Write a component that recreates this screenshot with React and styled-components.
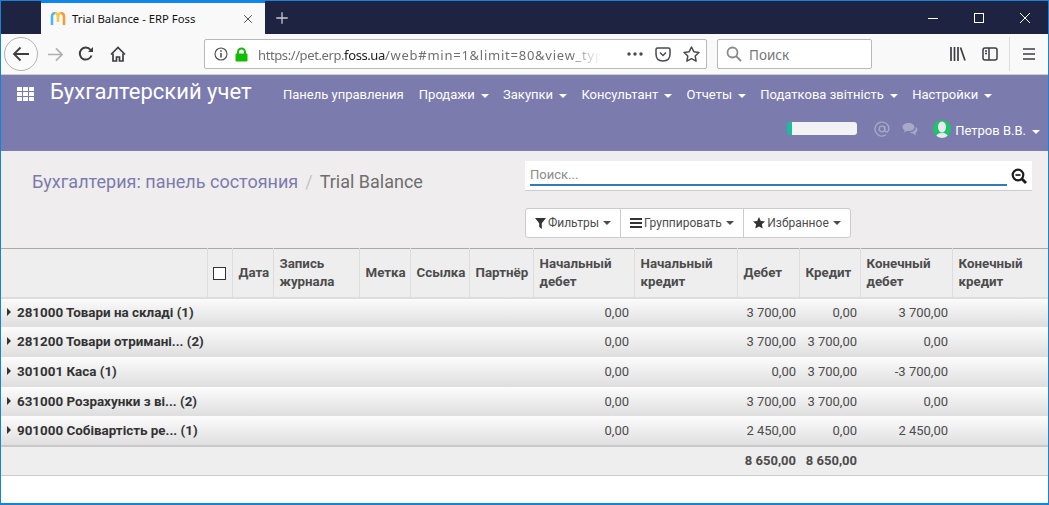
import React from 'react';
import styled, { createGlobalStyle } from 'styled-components';
import { X, Plus } from 'lucide-react';

const GlobalStyle = createGlobalStyle`
  html, body { margin: 0; padding: 0; background: #fff; overflow: hidden; }
  * { box-sizing: border-box; }
`;

const Win = styled.div`
  width: 1049px;
  height: 505px;
  border: 1px solid #1683d8;
  border-bottom-width: 2px;
  background: #fff;
  font-family: Roboto, sans-serif;
  overflow: hidden;
`;

/* browser chrome */
const TabBar = styled.div`
  height: 33px;
  background: #1f2342;
  display: flex;
  align-items: stretch;
  padding-left: 40px;
`;
const Tab = styled.div`
  width: 224px;
  background: #f9f9fa;
  border-top: 2px solid #0a84ff;
  display: flex;
  align-items: center;
  padding: 0 10px 0 9px;
  font: 11.3px 'Noto Sans', sans-serif;
  color: #111;
  svg:first-child { margin-right: 6px; }
  span { flex: 1; }
`;
const NewTab = styled.div`
  width: 34px;
  display: flex;
  align-items: center;
  justify-content: center;
  color: #c9cad2;
`;
const WinButtons = styled.div`
  margin-left: auto;
  display: flex;
  align-items: center;
  color: #fff;
`;
const WinButton = styled.div`
  width: 46px;
  height: 100%;
  display: flex;
  align-items: center;
  justify-content: center;
`;
const ToolBar = styled.div`
  height: 41px;
  background: #f9f9fa;
  border-bottom: 1px solid #ccc;
  display: flex;
  align-items: center;
  padding-left: 3px;
  color: #3e3e40;
`;
const BackCircle = styled.div`
  width: 34px;
  height: 34px;
  border-radius: 50%;
  border: 1px solid #b3b3b3;
  background: #fbfbfb;
  display: flex;
  align-items: center;
  justify-content: center;
`;
const NavIcon = styled.div`
  width: ${p => p.$w}px;
  display: flex;
  justify-content: center;
  color: ${p => p.$dim ? '#b0b0b1' : 'inherit'};
`;
const UrlBar = styled.div`
  width: 503px;
  height: 30px;
  margin-left: 68px;
  background: #fff;
  border: 1px solid #b9b9bb;
  border-radius: 2px;
  display: flex;
  align-items: center;
  padding-left: 9px;
  font: 13px 'Noto Sans', sans-serif;
  color: #6f6f73;
`;
const UrlText = styled.div`
  margin-left: 10px;
  padding-top: 2px;
  white-space: nowrap;
  mask-image: linear-gradient(to right, #000 90%, transparent 99%);
  b { font-weight: 400; color: #222; }
`;
const UrlPart = styled.span`
  letter-spacing: ${p => p.$sp}px;
`;
const UrlIcons = styled.div`
  margin-left: auto;
  display: flex;
  align-items: center;
  gap: 12px;
  padding-right: 6px;
  color: #4a4a4f;
`;
const SearchBar = styled.div`
  width: 155px;
  height: 30px;
  margin-left: 10px;
  background: #fff;
  border: 1px solid #b9b9bb;
  border-radius: 2px;
  display: flex;
  align-items: center;
  gap: 7px;
  padding-left: 8px;
  font: 13.5px 'Noto Sans', sans-serif;
  color: #777;
`;
const SearchLabel = styled.span`
  padding-top: 2px;
`;
const ToolRight = styled.div`
  margin-left: auto;
  display: flex;
  align-items: center;
  height: 100%;
  padding-right: 12px;
`;
const ToolDivider = styled.div`
  width: 1px;
  height: 34px;
  background: #ddd;
  margin: 0 12px 0 11px;
`;

/* app navbar */
const AppNav = styled.div`
  height: 76px;
  background: #7c7bad;
  color: #fff;
`;
const NavTop = styled.div`
  height: 37px;
  display: flex;
  align-items: center;
  padding-left: 16px;
`;
const AppTitle = styled.div`
  font-size: 22px;
  line-height: 30px;
  margin: -4px 32px 0 15px;
  width: 201px;
  white-space: nowrap;
`;
const Menu = styled.div`
  display: flex;
  gap: 14.3px;
  font-size: 13px;
  padding-top: 2px;
  span:first-child { margin-right: 1px; }
`;
const Caret = styled.i`
  display: inline-block;
  width: 0;
  height: 0;
  margin-left: ${p => p.$gap || 6}px;
  vertical-align: middle;
  border-top: 4px solid currentColor;
  border-left: 4px solid transparent;
  border-right: 4px solid transparent;
`;
const NavBottom = styled.div`
  height: 39px;
  display: flex;
  align-items: center;
  justify-content: flex-end;
  padding: 0 8px 6px 0;
  font-size: 13px;
`;
const Progress = styled.div`
  width: 70px;
  height: 13px;
  background: #f2f2f4;
  border-left: 5px solid #1abc9c;
  border-radius: 3px;
  margin-right: 17px;
`;
const NavGlyph = styled.div`
  display: flex;
  color: #a9a8c9;
  margin-right: ${p => p.$mr}px;
`;
const Avatar = styled.div`
  width: 18px;
  height: 18px;
  border-radius: 50%;
  background: #1ec36b;
  overflow: hidden;
  margin-right: 4px;
  display: flex;
`;
const UserName = styled.span`
  padding-top: 4px;
`;

/* control panel */
const ControlPanel = styled.div`
  height: 97px;
  background: #efeded;
  display: flex;
`;
const Breadcrumb = styled.div`
  width: 524px;
  padding: 20px 0 0 31px;
  font-size: 18px;
  line-height: 22px;
  color: #6e6e6e;
  a { color: #7c7bad; }
  i { font-style: normal; color: #c4c4c4; margin: 0 7px; }
`;
const RightPanel = styled.div`
  display: flex;
  flex-direction: column;
  padding-top: 10px;
`;
const SearchView = styled.div`
  width: 507px;
  height: 30px;
  background: #fff;
  border-bottom: 1px solid #ccc;
  padding: 5px 5px 0 5px;
  display: flex;
  gap: 4px;
  align-items: flex-start;
`;
const SearchInput = styled.div`
  flex: 1;
  height: 20px;
  border-bottom: 2px solid #337ab7;
  font-size: 13px;
  line-height: 17px;
  color: #8b8b8b;
`;
const BtnGroup = styled.div`
  display: inline-flex;
  align-self: flex-start;
  margin-top: 17px;
  height: 30px;
  background: #fff;
  border: 1px solid #ccc;
  border-radius: 3px;
`;
const Btn = styled.div`
  display: flex;
  align-items: center;
  width: ${p => p.$w}px;
  justify-content: center;
  gap: 2px;
  font-size: 12px;
  color: #4c4c4c;
  & + & { border-left: 1px solid #ccc; }
  svg { color: #333; }
`;

/* table */
const Table = styled.table`
  width: 1047px;
  table-layout: fixed;
  border-collapse: collapse;
  font-size: 13px;
`;
const Th = styled.th`
  height: 49px;
  padding: 1px 6px 0;
  text-align: left;
  font-size: 13.3px;
  font-weight: 700;
  line-height: 18px;
  color: #4c4c4c;
  background: #eee;
  border-top: 1px solid #aaa;
  border-bottom: 2px solid #ddd;
  border-right: 1px solid #ddd;
  &:last-child { border-right: 0; }
`;
const Tr = styled.tr`
  height: ${p => p.$h}px;
  background: linear-gradient(to bottom, #fcfcfc, #dedede);
`;
const GroupName = styled.td`
  padding: 0 0 0 6px;
  font-size: 13.4px;
  font-weight: 700;
  color: #333;
  white-space: nowrap;
`;
const Arrow = styled.i`
  display: inline-block;
  width: 0;
  height: 0;
  margin-right: 6px;
  vertical-align: 1px;
  border-left: 4px solid #333;
  border-top: 4px solid transparent;
  border-bottom: 4px solid transparent;
`;
const Num = styled.td`
  padding: 0 ${p => p.$pr || 4}px 0 0;
  text-align: right;
  color: #4c4c4c;
  white-space: nowrap;
`;
const FootRow = styled.tr`
  height: 30px;
  background: #eee;
  border-top: 2px solid #c8c8c8;
  border-bottom: 1px solid #ccc;
`;
const FootCell = styled.td`
  padding: 0 3px 0 0;
  text-align: right;
  font-weight: 700;
  color: #4c4c4c;
  white-space: nowrap;
`;
const CheckBox = styled.div`
  width: 13px;
  height: 13px;
  border: 1px solid #333;
  background: #fff;
  margin-left: -1px;
`;

const widths = [206, 25, 41, 86, 51, 59, 64, 101, 103, 62, 61, 92, 96];
const groups = [
  { h: 29, name: '281000 Товари на складі (1)', vals: ['0,00', '3 700,00', '0,00', '3 700,00'] },
  { h: 30, name: '281200 Товари отримані... (2)', vals: ['0,00', '3 700,00', '3 700,00', '0,00'] },
  { h: 30, name: '301001 Каса (1)', vals: ['0,00', '0,00', '3 700,00', '-3 700,00'] },
  { h: 29, name: '631000 Розрахунки з ві... (2)', vals: ['0,00', '3 700,00', '3 700,00', '0,00'] },
  { h: 30, name: '901000 Собівартість ре... (1)', vals: ['0,00', '2 450,00', '0,00', '2 450,00'] },
];
const menu = ['Продажи', 'Закупки', 'Консультант', 'Отчеты', 'Податкова звітність', 'Настройки'];

const Favicon = () => (
  <svg width="16" height="16" viewBox="0 0 16 16" fill="none" strokeWidth="2.6">
    <path d="M2 14V6q0-4 3-4" stroke="#4db6f2" />
    <path d="M5 2q3 0 3 4v5" stroke="#f7c93e" />
    <path d="M8 6q0-4 3-4" stroke="#f7c93e" />
    <path d="M11 2q3 0 3 4v8" stroke="#f29a3d" />
  </svg>
);

export default function App() {
  return (
    <Win>
      <GlobalStyle />
      <TabBar>
        <Tab>
          <Favicon />
          <span>Trial Balance - ERP Foss</span>
          <X size={14} color="#444" strokeWidth={1.6} />
        </Tab>
        <NewTab><Plus size={18} strokeWidth={1.7} /></NewTab>
        <WinButtons>
          <WinButton>
            <svg width="10" height="10" viewBox="0 0 10 10" stroke="#fff" fill="none"><path d="M0 5.500h10" /></svg>
          </WinButton>
          <WinButton>
            <svg width="10" height="10" viewBox="0 0 10 10" stroke="#fff" fill="none"><rect x="0.500" y="0.500" width="9" height="9" /></svg>
          </WinButton>
          <WinButton>
            <svg width="10" height="10" viewBox="0 0 10 10" stroke="#fff" fill="none"><path d="m0 0 10 10M10 0 0 10" /></svg>
          </WinButton>
        </WinButtons>
      </TabBar>
      <ToolBar>
        <BackCircle>
          <svg width="18" height="16" viewBox="0 0 18 16" fill="none" stroke="#3e3e40" strokeWidth="1.8">
            <path d="M17 8H2M8.5 1.5 2 8l6.5 6.5" />
          </svg>
        </BackCircle>
        <NavIcon $dim $w={34}>
          <svg width="17" height="15" viewBox="0 0 18 16" fill="none" stroke="currentColor" strokeWidth="1.8">
            <path d="M1 8h15M9.5 1.500 16 8l-6.500 6.500" />
          </svg>
        </NavIcon>
        <NavIcon $w={28}>
          <svg width="16" height="16" viewBox="0 0 16 16" fill="none" stroke="currentColor" strokeWidth="2">
            <path d="M13.500 9.500A6 6 0 1 1 12.500 3.800" />
            <path d="M15 1v5h-5z" fill="currentColor" stroke="none" />
          </svg>
        </NavIcon>
        <NavIcon $w={36}>
          <svg width="16" height="16" viewBox="0 0 16 16" fill="none" stroke="currentColor" strokeWidth="1.700">
            <path d="M1 8.500 8 1.500l7 7" />
            <path d="M3 7.500V15h3.500v-4h3v4H13V7.500" />
          </svg>
        </NavIcon>
        <UrlBar>
          <svg width="14" height="14" viewBox="0 0 14 14" fill="none" stroke="#4a4a4f" strokeWidth="1.100">
            <circle cx="7" cy="7" r="6" />
            <path d="M7 6v4.500M7 3.300v1.500" strokeWidth="1.500" />
          </svg>
          <svg width="13" height="15" viewBox="0 0 13 15" style={{ marginLeft: 7 }}>
            <path d="M3 7V5a3.500 3.500 0 0 1 7 0v2" fill="none" stroke="#12bc00" strokeWidth="2" />
            <rect x="0.500" y="6.500" width="12" height="8" rx="1" fill="#12bc00" />
          </svg>
          <UrlText>
            <UrlPart $sp={-0.4}>https://pet.erp.<b>foss.ua</b></UrlPart>
            <UrlPart $sp={0.75}>/web#min=1&amp;limit=80&amp;view_typ</UrlPart>
          </UrlText>
          <UrlIcons>
            <svg width="16" height="4" viewBox="0 0 16 4" fill="currentColor">
              <circle cx="2" cy="2" r="1.700" /><circle cx="8" cy="2" r="1.700" /><circle cx="14" cy="2" r="1.700" />
            </svg>
            <svg width="16" height="15" viewBox="0 0 16 15" fill="none" stroke="currentColor" strokeWidth="1.500">
              <path d="M1 2.500q0-1.500 1.500-1.500h11Q15 1 15 2.500V7q0 7-7 7T1 7z" />
              <path d="m5 5.500 3 3 3-3" />
            </svg>
            <svg width="17" height="16" viewBox="0 0 17 16" fill="none" stroke="currentColor" strokeWidth="1.500">
              <path d="m8.500 1 2.300 4.700 5.200.7-3.800 3.600.9 5.100-4.600-2.500-4.600 2.500.9-5.100L1 6.400l5.200-.7z" strokeLinejoin="round" />
            </svg>
          </UrlIcons>
        </UrlBar>
        <SearchBar>
          <svg width="16" height="16" viewBox="0 0 16 16" fill="none" stroke="#8a8a8d" strokeWidth="1.800">
            <circle cx="6.500" cy="6.500" r="5" /><path d="m10 10 5 5" />
          </svg>
          <SearchLabel>Поиск</SearchLabel>
        </SearchBar>
        <ToolRight>
          <svg width="16" height="14" viewBox="0 0 16 14" fill="none" stroke="currentColor" strokeWidth="1.700">
            <path d="M1 0v14M4.500 0v14M8 0v14M10.500.5l4.500 13" />
          </svg>
          <svg width="16" height="14" viewBox="0 0 16 14" fill="none" stroke="currentColor" strokeWidth="1.500" style={{ marginLeft: 16 }}>
            <rect x="1" y="1" width="14" height="12" rx="2" />
            <path d="M7 1v12M3 4h2M3 6.500h2" />
          </svg>
          <ToolDivider />
          <svg width="14" height="12" viewBox="0 0 14 12" fill="none" stroke="currentColor" strokeWidth="1.700">
            <path d="M1 1h12M1 6h12M1 11h12" />
          </svg>
        </ToolRight>
      </ToolBar>

      <AppNav>
        <NavTop>
          <svg width="18" height="14" viewBox="0 0 18 14" fill="#fff">
            {[0, 5, 10].map(y => [0, 6, 12].map(x => <rect key={`${x}-${y}`} x={x} y={y} width="5" height="4" rx="0.500" />))}
          </svg>
          <AppTitle>Бухгалтерский учет</AppTitle>
          <Menu>
            <span>Панель управления</span>
            {menu.map(m => <span key={m}>{m}<Caret /></span>)}
          </Menu>
        </NavTop>
        <NavBottom>
          <Progress />
          <NavGlyph $mr={12}>
            <svg width="16" height="16" viewBox="0 0 16 16" fill="none" stroke="currentColor" strokeWidth="1.300">
              <circle cx="8" cy="8" r="2.800" />
              <path d="M10.800 5.200V9q0 2 1.700 2T15 8A7 7 0 1 0 12 13.800" />
            </svg>
          </NavGlyph>
          <NavGlyph $mr={14}>
            <svg width="17" height="14" viewBox="0 0 17 14" fill="currentColor">
              <path d="M6.500 1C3 1 .5 2.800.5 5c0 1.300.8 2.400 2 3.100L2 10.500l2.600-1.600q1 .2 1.900.2c3.500 0 6-1.800 6-4.100S10 1 6.500 1z" />
              <path d="M13.500 4.500q.3.500.3 1c0 2.800-2.800 4.700-6.300 4.800 1 .9 2.200 1.200 3.500 1.200l3 2-.5-2.700c1.300-.6 2-1.600 2-2.700 0-1.600-.8-2.700-2-3.600z" />
            </svg>
          </NavGlyph>
          <Avatar>
            <svg width="18" height="18" viewBox="0 0 18 18" fill="#e9e9ee">
              <ellipse cx="9" cy="7" rx="4" ry="5.500" />
              <path d="M3 18q0-5 6-5t6 5z" />
            </svg>
          </Avatar>
          <UserName>Петров В.В.<Caret $gap={6} /></UserName>
        </NavBottom>
      </AppNav>

      <ControlPanel>
        <Breadcrumb><a>Бухгалтерия: панель состояния</a><i>/</i>Trial Balance</Breadcrumb>
        <RightPanel>
          <SearchView>
            <SearchInput>Поиск...</SearchInput>
            <svg width="16" height="16" viewBox="0 0 16 16" fill="none" stroke="#1c1c1c" strokeWidth="2.200" style={{ marginTop: 2 }}>
              <circle cx="7" cy="7" r="5.300" />
              <path d="M4.500 7h5" strokeWidth="1.700" />
              <path d="m11 11 4 4" strokeWidth="2.800" />
            </svg>
          </SearchView>
          <BtnGroup>
            <Btn $w={94}>
              <svg width="11" height="11" viewBox="0 0 11 11" fill="currentColor"><path d="M0 0h11L6.800 5.200V11L4.200 9V5.200z" /></svg>
              Фильтры<Caret $gap={2} />
            </Btn>
            <Btn $w={123}>
              <svg width="12" height="10" viewBox="0 0 12 10" fill="currentColor"><path d="M0 0h12v2H0zM0 4h12v2H0zM0 8h12v2H0z" /></svg>
              Группировать<Caret $gap={2} />
            </Btn>
            <Btn $w={107}>
              <svg width="12" height="12" viewBox="0 0 12 12" fill="currentColor"><path d="m6 0 1.800 3.900 4.200.5-3.100 2.900.8 4.200L6 9.400l-3.700 2.100.8-4.200L0 4.400l4.200-.5z" /></svg>
              Избранное<Caret $gap={2} />
            </Btn>
          </BtnGroup>
        </RightPanel>
      </ControlPanel>

      <Table>
        <colgroup>{widths.map((w, i) => <col key={i} width={w} />)}</colgroup>
        <thead>
          <tr>
            <Th />
            <Th><CheckBox /></Th>
            <Th>Дата</Th>
            <Th>Запись журнала</Th>
            <Th>Метка</Th>
            <Th>Ссылка</Th>
            <Th>Партнёр</Th>
            <Th>Начальный дебет</Th>
            <Th>Начальный кредит</Th>
            <Th>Дебет</Th>
            <Th>Кредит</Th>
            <Th>Конечный дебет</Th>
            <Th>Конечный кредит</Th>
          </tr>
        </thead>
        <tbody>
          {groups.map(g => (
            <Tr key={g.name} $h={g.h}>
              <GroupName colSpan={7}><Arrow />{g.name}</GroupName>
              <Num $pr={5}>{g.vals[0]}</Num>
              <Num />
              <Num $pr={3}>{g.vals[1]}</Num>
              <Num $pr={3}>{g.vals[2]}</Num>
              <Num>{g.vals[3]}</Num>
              <Num />
            </Tr>
          ))}
        </tbody>
        <tfoot>
          <FootRow>
            <FootCell colSpan={9} />
            <FootCell>8 650,00</FootCell>
            <FootCell>8 650,00</FootCell>
            <FootCell colSpan={2} />
          </FootRow>
        </tfoot>
      </Table>
    </Win>
  );
}
